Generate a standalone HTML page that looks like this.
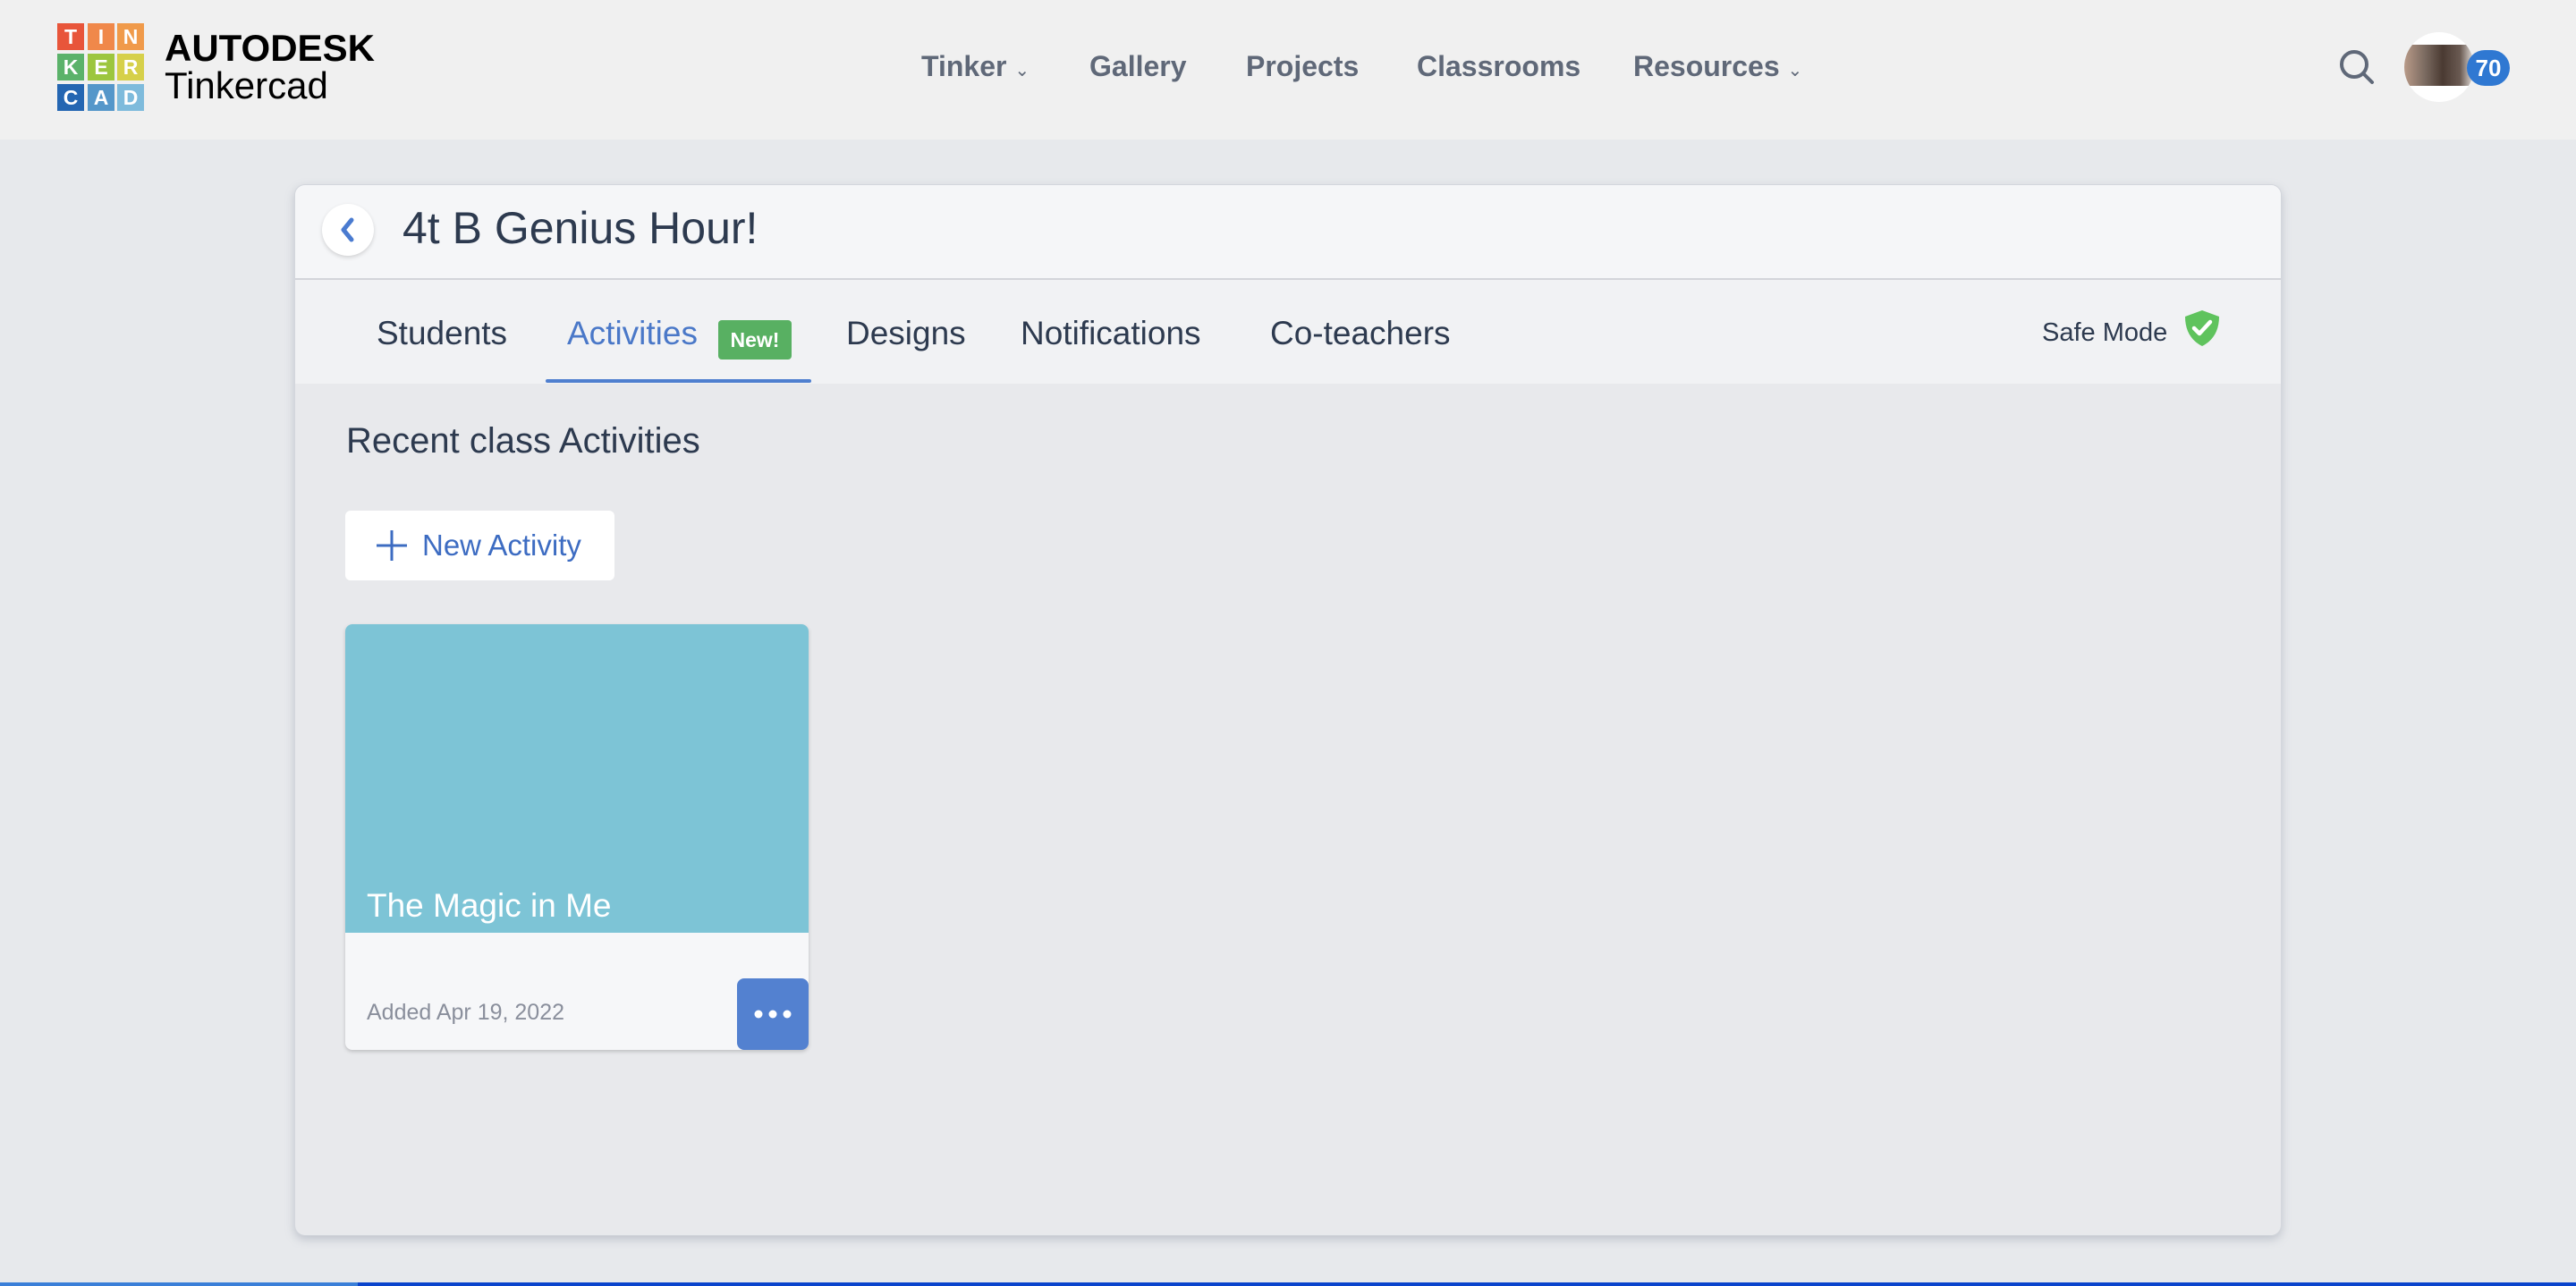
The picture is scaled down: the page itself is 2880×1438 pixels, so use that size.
<!DOCTYPE html>
<html><head><meta charset="utf-8"><style>
*{margin:0;padding:0;box-sizing:border-box}
body{width:2880px;height:1438px;background:#e7e9ec;font-family:"Liberation Sans",sans-serif;position:relative;overflow:hidden}
.a{position:absolute;white-space:nowrap}
.hdr{position:absolute;left:0;top:0;width:2880px;height:156px;background:#f0f0f0}
.sq{position:absolute;width:30px;height:30px;color:#fff;font-weight:bold;font-size:23px;text-align:center;line-height:30px}
.nav{font-weight:bold;font-size:32px;color:#5f6878;top:56px}
.card{position:absolute;left:329px;top:206px;width:2222px;height:1176px;background:#e8e9ec;border-radius:12px;box-shadow:0 4px 10px rgba(120,130,150,.35);border:1px solid #d3d6dc;overflow:hidden}
.tab{font-size:37px;color:#2d3a4f;top:352px}
</style></head><body>
<div class="hdr"></div>
<div class="sq" style="left:64px;top:26px;background:#e8553a">T</div>
<div class="sq" style="left:98px;top:26px;background:#f0884a">I</div>
<div class="sq" style="left:131px;top:26px;background:#f09a4a">N</div>
<div class="sq" style="left:64px;top:60px;background:#5bb26a">K</div>
<div class="sq" style="left:98px;top:60px;background:#9cc63e">E</div>
<div class="sq" style="left:131px;top:60px;background:#d6d04a">R</div>
<div class="sq" style="left:64px;top:94px;background:#2466b2">C</div>
<div class="sq" style="left:98px;top:94px;background:#5597ca">A</div>
<div class="sq" style="left:131px;top:94px;background:#7ebbdc">D</div>
<div class="a" style="left:184px;top:30px;font-size:42px;font-weight:900;color:#000">AUTODESK</div>
<div class="a" style="left:184px;top:72px;font-size:42px;color:#000">Tinkercad</div>
<div class="a nav" style="left:1030px">Tinker <span style="font-size:20px;font-weight:normal">&#8964;</span></div>
<div class="a nav" style="left:1218px">Gallery</div>
<div class="a nav" style="left:1393px">Projects</div>
<div class="a nav" style="left:1584px">Classrooms</div>
<div class="a nav" style="left:1826px">Resources <span style="font-size:20px;font-weight:normal">&#8964;</span></div>
<svg class="a" style="left:2614px;top:54px" width="44" height="44" viewBox="0 0 44 44"><circle cx="18" cy="18" r="14" fill="none" stroke="#5f6878" stroke-width="4"/><path d="M28 28L38 38" stroke="#5f6878" stroke-width="4" stroke-linecap="round"/></svg>
<div class="a" style="left:2688px;top:36px;width:78px;height:78px;border-radius:50%;background:#fff;overflow:hidden">
 <div style="position:absolute;left:0;top:14px;width:78px;height:46px;background:linear-gradient(90deg,#b89a88 0,#7a6a60 30%,#4a3a32 55%,#6a5a52 80%,#e8e4e0 100%)"></div>
</div>
<div class="a" style="left:2758px;top:56px;width:48px;height:40px;border-radius:20px;background:#2f78d2;color:#fff;font-weight:bold;font-size:26px;text-align:center;line-height:40px">70</div>

<div class="card">
 <div style="position:absolute;left:0;top:0;width:100%;height:106px;background:#f5f6f8;border-bottom:2px solid #d3d5da"></div>
 <div style="position:absolute;left:0;top:106px;width:100%;height:116px;background:#f1f2f4"></div>
</div>
<div class="a" style="left:360px;top:228px;width:58px;height:58px;border-radius:50%;background:#fff;box-shadow:0 2px 5px rgba(0,0,0,.15)"></div>
<svg class="a" style="left:378px;top:242px" width="22" height="30" viewBox="0 0 22 30"><path d="M15 4L6 15L15 26" fill="none" stroke="#4a7bd0" stroke-width="5" stroke-linecap="round" stroke-linejoin="round"/></svg>
<div class="a" style="left:450px;top:226px;font-size:50px;color:#2d3a4f">4t B Genius Hour!</div>

<div class="a tab" style="left:421px">Students</div>
<div class="a tab" style="left:634px;color:#4a78c8">Activities</div>
<div class="a" style="left:803px;top:358px;width:82px;height:44px;background:#58b062;border-radius:4px;color:#fff;font-weight:bold;font-size:23px;text-align:center;line-height:44px">New!</div>
<div class="a" style="left:610px;top:424px;width:297px;height:4px;background:#4f7fcf;border-radius:2px"></div>
<div class="a tab" style="left:946px">Designs</div>
<div class="a tab" style="left:1141px">Notifications</div>
<div class="a tab" style="left:1420px">Co-teachers</div>
<div class="a" style="left:2283px;top:356px;font-size:29px;color:#2d3a4f">Safe Mode</div>
<svg class="a" style="left:2442px;top:346px" width="40" height="42" viewBox="0 0 40 42"><path d="M20 1L39 8C39 24 32 35 20 41C8 35 1 24 1 8Z" fill="#5fc35d"/><path d="M11 21L17 27L29 14" fill="none" stroke="#fff" stroke-width="4.5" stroke-linecap="round" stroke-linejoin="round"/></svg>

<div class="a" style="left:387px;top:471px;font-size:40px;color:#2d3a4f">Recent class Activities</div>
<div class="a" style="left:386px;top:571px;width:301px;height:78px;background:#fff;border-radius:6px"></div>
<svg class="a" style="left:418px;top:590px" width="40" height="40" viewBox="0 0 40 40"><path d="M20 3V37M3 20H37" stroke="#3d6cc2" stroke-width="3"/></svg>
<div class="a" style="left:472px;top:591px;font-size:33px;color:#3d6cc2">New Activity</div>

<div class="a" style="left:386px;top:698px;width:518px;height:476px;background:#f6f7f9;border-radius:8px;box-shadow:0 2px 4px rgba(0,0,0,.18);overflow:hidden">
 <div style="height:345px;background:#7dc4d6"></div>
</div>
<div class="a" style="left:410px;top:992px;font-size:37px;color:#fff">The Magic in Me</div>
<div class="a" style="left:410px;top:1118px;font-size:25px;color:#8a8f9c">Added Apr 19, 2022</div>
<div class="a" style="left:824px;top:1094px;width:80px;height:80px;background:#5381d0;border-radius:8px"></div>
<svg class="a" style="left:824px;top:1094px" width="80" height="80"><circle cx="24" cy="40" r="4.5" fill="#fff"/><circle cx="40" cy="40" r="4.5" fill="#fff"/><circle cx="56" cy="40" r="4.5" fill="#fff"/></svg>

<div class="a" style="left:0;top:1434px;width:2880px;height:4px;background:#0a44cc"></div>
<div class="a" style="left:0;top:1434px;width:400px;height:4px;background:#3a7fd8"></div>
</body></html>
